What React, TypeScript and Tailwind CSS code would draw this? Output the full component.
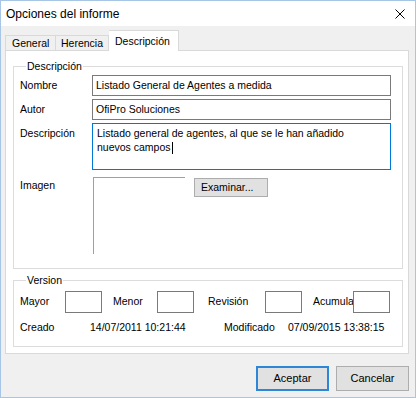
const font = "font-['Liberation_Sans',Arial,sans-serif]";

function Row({ label, children, top }: { label: string; children: React.ReactNode; top?: boolean }) {
  return (
    <div className={`flex ${top ? "items-start" : "items-center"}`}>
      <span className={`w-[72px] shrink-0 ${top ? "pt-[3px]" : ""}`}>{label}</span>
      {children}
    </div>
  );
}

function SmallBox() {
  return <div className="h-[22px] w-[37px] shrink-0 border border-[#7a7a7a] bg-white" />;
}

export default function App() {
  return (
    <div className={`flex h-[398px] w-[416px] flex-col overflow-hidden border border-[#a7c5e5] bg-[#f0f0f0] text-black ${font}`}>
      {/* barre de titre */}
      <div className="flex h-[25px] shrink-0 items-center justify-between bg-white pl-[5px] pr-[10px]">
        <span className="text-[12px]">Opciones del informe</span>
        <svg width="10" height="10" viewBox="0 0 10 10" className="stroke-black">
          <path d="M0.5 0.5l9 9M9.5 0.5l-9 9" strokeWidth="1" />
        </svg>
      </div>

      <div className="flex flex-col pl-[4px] pt-[4px] text-[10.5px]">
        {/* onglets */}
        <div className="relative z-10 -mb-px flex h-[21px] items-end">
          <div className="flex h-[16px] w-[51px] items-center border border-b-0 border-[#d9d9d9] pl-[6px]">General</div>
          <div className="flex h-[16px] w-[53px] items-center border border-b-0 border-l-0 border-[#d9d9d9] pl-[5px]">Herencia</div>
          <div className="flex h-[21px] w-[70px] items-start border border-b-0 border-l-0 border-[#d9d9d9] bg-white pl-[6px] pt-[3px]">Descripción</div>
        </div>

        {/* panneau */}
        <div className="flex h-[304px] w-[404px] flex-col border border-[#d9d9d9] bg-white pl-[7px] pr-[5px] pt-[9px]">
          <fieldset className="border border-[#dcdcdc] pb-[14px] pl-[6px]">
            <legend className="ml-[6px] px-px leading-[12px]">Descripción</legend>
            <div className="flex flex-col gap-[3px] pt-[3px]">
              <Row label="Nombre">
                <div className="flex h-[21px] w-[299px] items-center border border-[#7a7a7a] pl-[3px]">
                  Listado General de Agentes a medida
                </div>
              </Row>
              <Row label="Autor">
                <div className="flex h-[21px] w-[299px] items-center border border-[#7a7a7a] pl-[3px]">
                  OfiPro Soluciones
                </div>
              </Row>
              <Row label="Descripción" top>
                <div className="h-[47px] w-[299px] border border-[#0078d7] pl-[4px] pt-[2px] leading-[14px]">
                  Listado general de agentes, al que se le han añadido
                  <br />
                  nuevos campos<span className="ml-px inline-block h-[12px] border-l border-black align-middle" />
                </div>
              </Row>
            </div>
            <div className="mt-[7px] flex items-start">
              <span className="w-[73px] shrink-0 pt-[1px]">Imagen</span>
              <div className="h-[77px] w-[92px] shrink-0 border-l border-t border-[#a0a0a0]" />
              <button className="ml-[9px] mt-[1px] h-[19px] w-[74px] border border-[#adadad] bg-[#e1e1e1] pl-[6px] text-left">
                Examinar...
              </button>
            </div>
          </fieldset>

          <fieldset className="mt-[5px] border border-[#dcdcdc] pb-[10px] pl-[6px]">
            <legend className="ml-[6px] px-px leading-[12px]">Version</legend>
            <div className="flex items-center pt-[5px]">
              <div className="flex w-[93px] items-center">
                <span className="w-[45px]">Mayor</span>
                <SmallBox />
              </div>
              <div className="flex w-[95px] items-center">
                <span className="w-[44px]">Menor</span>
                <SmallBox />
              </div>
              <div className="flex w-[105px] items-center">
                <span className="w-[57px]">Revisión</span>
                <SmallBox />
              </div>
              <div className="flex items-center">
                <span className="w-[40px]">Acumula</span>
                <SmallBox />
              </div>
            </div>
            <div className="mt-[7px] flex items-center">
              <span className="w-[70px]">Creado</span>
              <span className="w-[134px]">14/07/2011 10:21:44</span>
              <span className="w-[64px]">Modificado</span>
              <span>07/09/2015 13:38:15</span>
            </div>
          </fieldset>
        </div>

        {/* boutons */}
        <div className="mt-[12px] flex w-[404px] justify-end gap-[7px]">
          <button className="h-[25px] w-[73px] border-2 border-[#2f86d6] bg-[#e1e1e1] text-[11px]">Aceptar</button>
          <button className="h-[25px] w-[73px] border border-[#adadad] bg-[#e1e1e1] text-[11px]">Cancelar</button>
        </div>
      </div>
    </div>
  );
}
